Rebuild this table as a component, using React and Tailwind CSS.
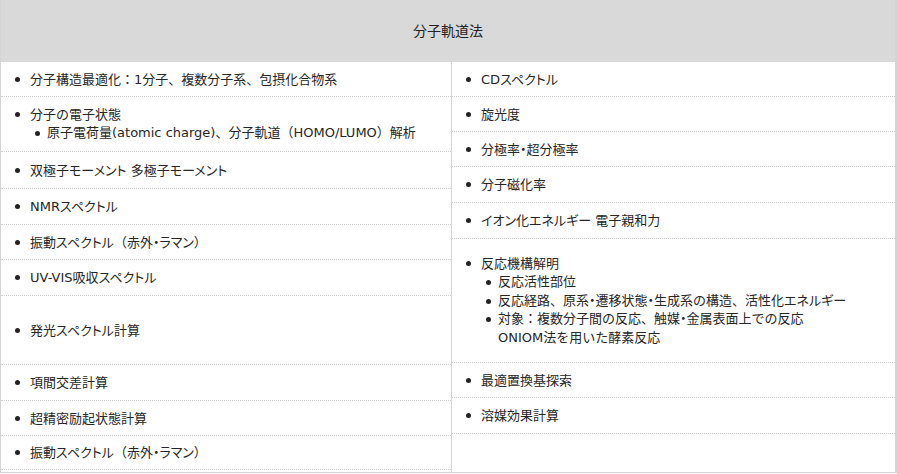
import React from 'react'

// katakana and "・" set proportionally, as Meiryo does; punctuation stays full width
const K = ({ children }) => {
    if (typeof children !== 'string') return children
    return children.split(/([\u30A0-\u30FF]+)/).map((p, i) =>
        i % 2 ? <span key={i} className="[font-feature-settings:'palt']">{p}</span> : p
    )
}

const leftItems = [
    { h: 'h-[35px]', text: '分子構造最適化：1分子、複数分子系、包摂化合物系' },
    { h: 'h-[55px]', text: '分子の電子状態', sub: ['原子電荷量(atomic charge)、分子軌道（HOMO/LUMO）解析'] },
    { h: 'h-[37px]', text: '双極子モーメント 多極子モーメント' },
    { h: 'h-[36px]', text: 'NMRスペクトル' },
    { h: 'h-[35px]', text: '振動スペクトル（赤外・ラマン）' },
    { h: 'h-[36px]', text: 'UV-VIS吸収スペクトル' },
    { h: 'h-[69px]', text: '発光スペクトル計算' },
    { h: 'h-[36px]', text: '項間交差計算' },
    { h: 'h-[35px]', text: '超精密励起状態計算' },
    { h: 'h-[34px]', text: '振動スペクトル（赤外・ラマン）' },
]

const rightItems = [
    { h: 'h-[35px]', text: 'CDスペクトル' },
    { h: 'h-[35px]', text: '旋光度' },
    { h: 'h-[35px]', text: '分極率・超分極率' },
    { h: 'h-[36px]', text: '分子磁化率' },
    { h: 'h-[36px]', text: 'イオン化エネルギー 電子親和力' },
    {
        h: 'h-[124px]',
        text: '反応機構解明',
        sub: [
            '反応活性部位',
            '反応経路、原系・遷移状態・生成系の構造、活性化エネルギー',
            <>対象：複数分子間の反応、触媒<K>・</K>金属表面上での反応<br />ONIOM法を用いた酵素反応</>,
        ],
    },
    { h: 'h-[35px]', text: '最適置換基探索' },
    { h: 'h-[36px]', text: '溶媒効果計算' },
]

const Dot = () => (
    <span className="absolute left-0 top-[7px] w-[5px] h-[5px] rounded-full bg-[#222]" />
)

const Row = ({ item }) => (
    <li className={`${item.h} flex flex-col justify-center border-b border-dotted border-[#cfcfcf] pl-[14px] pr-2`}>
        <div className="relative pl-[15px] leading-[19px]">
            <Dot />
            <K>{item.text}</K>
        </div>
        {item.sub && (
            <ul className="pl-[20px]">
                {item.sub.map((s, i) => (
                    <li key={i} className="relative pl-[12px] leading-[18.5px]">
                        <Dot />
                        <K>{s}</K>
                    </li>
                ))}
            </ul>
        )}
    </li>
)

export default function App() {
    return (
        <div
            className="w-[897px] h-[474px] bg-white text-[#262626] text-[13px]"
            style={{ fontFamily: '"DejaVu Sans", "Noto Sans CJK JP", sans-serif' }}
        >
            <div className="h-[473px] border-l border-r-2 border-b border-[#d4d4d4] flex flex-col">
                <div className="h-[62px] bg-[#d9d9d9] flex items-center justify-center text-[14px] text-[#222]">
                    分子軌道法
                </div>
                <div className="flex flex-1">
                    <ul className="w-[451px] border-r border-[#d4d4d4]">
                        {leftItems.map((item, i) => <Row key={i} item={item} />)}
                    </ul>
                    <ul className="flex-1">
                        {rightItems.map((item, i) => <Row key={i} item={item} />)}
                    </ul>
                </div>
            </div>
        </div>
    )
}
